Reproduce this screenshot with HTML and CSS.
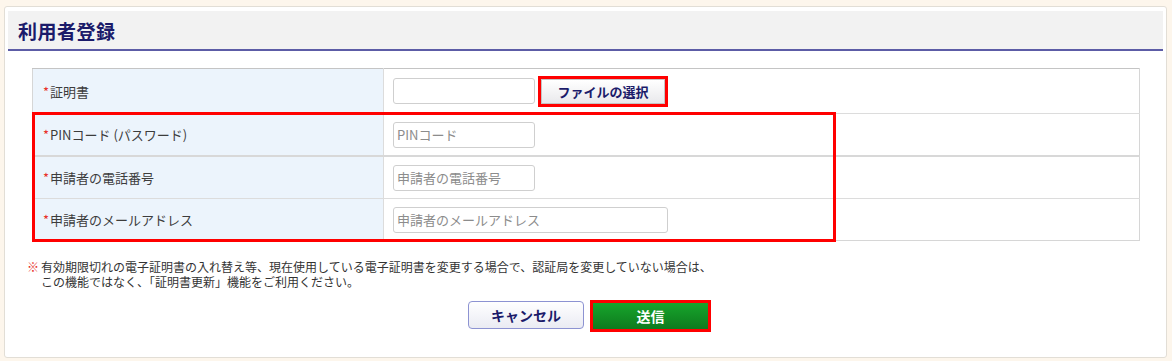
FILE: index.html
```html
<!DOCTYPE html>
<html lang="ja">
<head>
    <meta charset="UTF-8">
    <title>利用者登録</title>
    <link rel="stylesheet" href="styles.css">
</head>
<body>
    <div class="panel">
        <div class="panel-head">
            <h1>利用者登録</h1>
        </div>
        <div class="form-wrap">
            <table class="form-table">
                <tr class="row-first">
                    <th><span class="req">*</span>証明書</th>
                    <td>
                        <input type="text" class="field field-short">
                        <button class="btn-file marked">ファイルの選択</button>
                    </td>
                </tr>
                <tr class="row-second">
                    <th><span class="req">*</span>PINコード (パスワード)</th>
                    <td><input type="text" class="field field-short" placeholder="PINコード"></td>
                </tr>
                <tr>
                    <th><span class="req">*</span>申請者の電話番号</th>
                    <td><input type="text" class="field field-short" placeholder="申請者の電話番号"></td>
                </tr>
                <tr>
                    <th><span class="req">*</span>申請者のメールアドレス</th>
                    <td><input type="text" class="field field-long" placeholder="申請者のメールアドレス"></td>
                </tr>
            </table>
            <div class="mark-box"></div>
        </div>
        <p class="note">
            <span class="note-mark">※</span>
            <span>有効期限切れの電子証明書の入れ替え等、現在使用している電子証明書を変更する場合で、認証局を変更していない場合は、<br>この機能ではなく、「証明書更新」機能をご利用ください。</span>
        </p>
        <div class="actions">
            <button class="btn-cancel">キャンセル</button>
            <button class="btn-send marked">送信</button>
        </div>
    </div>
</body>
</html>
```

FILE: styles.css
```css
body {
    margin: 0;
    background-color: #fdf6ec;
    font-family: "Noto Sans CJK JP", "Noto Sans", sans-serif;
    color: #333;
}
.panel {
    margin: 6px 5px 3px 4px;
    height: 352px;
    box-sizing: border-box;
    background-color: white;
    border: 1px solid #e2ded6;
    border-radius: 3px;
    padding: 4px 3px 0 3px;
}
.panel-head {
    height: 38px;
    background-color: #f2f2f2;
    border-bottom: 2px solid #5c5ca6;
    display: flex;
    align-items: center;
}
.panel-head h1 {
    margin: 0 0 0 10px;
    font-size: 19px;
    font-weight: bold;
    color: #1b1b6a;
    letter-spacing: 0.5px;
}
.form-wrap {
    position: relative;
    margin: 17px 23px 0 24px;
}
.form-table {
    width: 100%;
    border-collapse: collapse;
    border: 1px solid #d6d6d6;
    border-top-color: #c4c4c4;
    font-size: 13px;
}
.form-table th,
.form-table td {
    height: 41px;
    border-top: 1px solid #dcdcdc;
    padding: 0;
    vertical-align: middle;
}
.form-table th {
    width: 340px;
    background-color: #ecf4fc;
    border-right: 1px solid #dcdcdc;
    text-align: left;
    font-weight: normal;
    color: #3c3c3c;
    padding-left: 10px;
}
.form-table td {
    padding-left: 9px;
}
.row-first th,
.row-first td {
    height: 44px;
    border-top: none;
}
.row-second + tr th,
.row-second + tr td {
    border-top: 2px solid #d8d8d8;
}
.req {
    color: #e8302a;
    margin-right: 1px;
}
.field {
    height: 26px;
    box-sizing: border-box;
    border: 1px solid #cfcfcf;
    border-radius: 3px;
    padding: 0 3px;
    font-family: inherit;
    font-size: 13px;
    color: #333;
    vertical-align: middle;
}
.field::placeholder {
    color: #8c8c8c;
}
.field-short {
    width: 142px;
}
.field-long {
    width: 275px;
}
.btn-file {
    width: 124px;
    height: 25px;
    margin-left: 3px;
    border: 1px solid #c4c4c4;
    background: linear-gradient(#ffffff, #e9e9ec);
    color: #1b1b6a;
    font-family: inherit;
    font-size: 13px;
    font-weight: bold;
    vertical-align: middle;
    padding: 0;
}
.marked {
    outline: 3px solid #ff0000;
}
.mark-box {
    position: absolute;
    left: 0;
    top: 44px;
    width: 804px;
    height: 130px;
    box-sizing: border-box;
    border: 3px solid #ff0000;
}
.note {
    display: flex;
    margin: 18px 0 0 19px;
    font-size: 12px;
    line-height: 15px;
}
.note-mark {
    color: #e8302a;
    font-weight: bold;
    width: 14px;
    flex-shrink: 0;
}
.actions {
    display: flex;
    justify-content: center;
    gap: 9px;
    margin-top: 12px;
    padding-left: 5px;
}
.btn-cancel {
    width: 116px;
    height: 28px;
    border: 1px solid #8d93d2;
    border-radius: 4px;
    background: linear-gradient(#ffffff, #eaebf3);
    color: #1b1b6a;
    font-family: inherit;
    font-size: 14px;
    font-weight: bold;
    padding: 0;
}
.btn-send {
    width: 115px;
    height: 26px;
    margin-top: 2px;
    border: none;
    background: linear-gradient(#17a52c, #0e7a1e);
    color: white;
    font-family: inherit;
    font-size: 14px;
    font-weight: bold;
    padding: 0;
}
```
